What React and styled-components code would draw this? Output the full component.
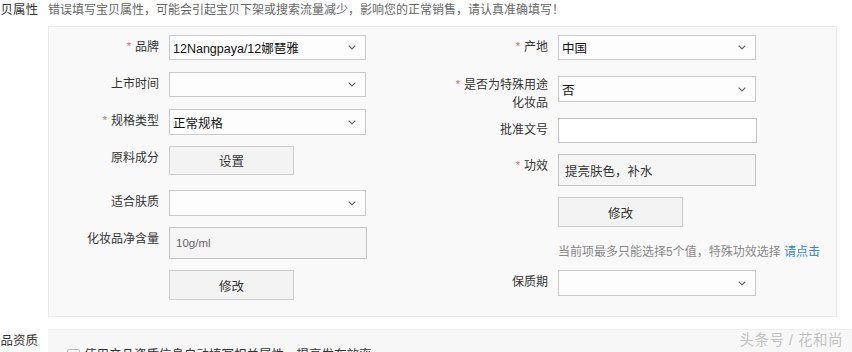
import React from 'react';
import styled, { createGlobalStyle } from 'styled-components';

const GlobalStyle = createGlobalStyle`
  html, body {
    margin: 0;
    padding: 0;
    background: #fff;
    overflow: hidden;
  }
  body {
    font-family: "Liberation Sans", "Noto Sans CJK SC", sans-serif;
    font-size: 12px;
    color: #333;
  }
`;

const Page = styled.div`
  position: relative;
  width: 852px;
  height: 352px;
  padding-top: 1px;
  box-sizing: border-box;
  overflow: hidden;
`;

const Section = styled.div`
  display: flex;
  margin-top: ${p => p.$top || 0}px;
`;

const SideLabel = styled.div`
  width: 60px;
  margin-left: -12px;
  flex-shrink: 0;
  line-height: 18px;
  padding-top: ${p => p.$pad || 0}px;
  color: #333;
  font-size: 12.5px;
  white-space: nowrap;
`;

const Main = styled.div`
  display: flex;
  flex-direction: column;
`;

const Notice = styled.div`
  line-height: 18px;
  color: #666;
  white-space: nowrap;
`;

const Panel = styled.div`
  margin-top: 7px;
  width: 789px;
  box-sizing: border-box;
  background: #f9f9f9;
  border: 1px solid #ebebeb;
  padding: 8px 0 16px;
  display: grid;
  grid-template-columns: 389px 1fr;
`;

const Column = styled.div`
  display: flex;
  flex-direction: column;
`;

const FieldRow = styled.div`
  display: flex;
  align-items: flex-start;
  gap: 10px;
  margin-top: ${p => p.$top || 0}px;
`;

const Label = styled.div`
  width: 110px;
  flex-shrink: 0;
  text-align: right;
  line-height: 18px;
  padding-top: ${p => (p.$pad === undefined ? 3 : p.$pad)}px;
  color: #333;
  white-space: nowrap;
`;

const Star = styled.span`
  position: relative;
  top: -1px;
  color: #e8606a;
  font-size: 11px;
  margin-right: 4px;
`;

const Offset = styled.div`
  padding-left: 120px;
  margin-top: ${p => p.$top || 0}px;
`;

const SelectBox = styled.div`
  width: ${p => p.$w || 197}px;
  height: ${p => p.$h || 25}px;
  box-sizing: border-box;
  border: 1px solid #c9c9c9;
  background: #fdfdfd;
  display: flex;
  align-items: center;
  justify-content: space-between;
  padding: 0 9px 0 3px;
  color: #111;
  font-size: 12.5px;
`;

const TextInput = styled.div`
  width: ${p => p.$w || 197}px;
  height: ${p => p.$h || 25}px;
  box-sizing: border-box;
  border: 1px solid #c4c4c4;
  background: ${p => (p.$readonly ? '#f5f5f5' : '#fff')};
  display: flex;
  align-items: center;
  padding: 0 ${p => (p.$readonly ? 6 : 3)}px;
  color: ${p => (p.$small ? '#666' : '#333')};
  font-size: ${p => (p.$small ? 11.5 : 12.5)}px;
`;

const Button = styled.div`
  width: 125px;
  height: ${p => p.$h || 30}px;
  box-sizing: border-box;
  border: 1px solid #cdcdcd;
  background: #f3f3f3;
  display: flex;
  align-items: center;
  justify-content: center;
  color: #333;
  font-size: 12.5px;
`;

const Hint = styled.div`
  line-height: 18px;
  font-size: 12px;
  color: #888;
  white-space: nowrap;
`;

const Link = styled.span`
  color: #2e8ad8;
`;

const Panel2 = styled.div`
  flex: 1;
  height: 40px;
  background: #f7f7f7;
  border-top: 1px solid #eeeeee;
  padding: 19px 0 0 19px;
  display: flex;
  align-items: flex-start;
  gap: 4px;
`;

const Checkbox = styled.div`
  width: 13px;
  height: 13px;
  box-sizing: border-box;
  border: 1px solid #b9b9b9;
  border-radius: 2px;
  background: #fff;
`;

const CheckText = styled.div`
  line-height: 13px;
  color: #333;
  font-size: 12.5px;
`;

const Watermark = styled.div`
  position: absolute;
  right: 9px;
  bottom: 3px;
  font-size: 14.5px;
  color: #c2c2c2;
  letter-spacing: 0.5px;
  white-space: nowrap;
`;

const Chevron = () => (
  <svg width="8" height="5" viewBox="0 0 8 5">
    <path d="M0.7 0.7 L4 4 L7.3 0.7" fill="none" stroke="#666" strokeWidth="1.2" />
  </svg>
);

const Select = ({ value, w, h }) => (
  <SelectBox $w={w} $h={h}>
    <span>{value}</span>
    <Chevron />
  </SelectBox>
);

const App = () => (
  <Page>
    <GlobalStyle />
    <Section>
      <SideLabel>宝贝属性</SideLabel>
      <Main>
        <Notice>错误填写宝贝属性，可能会引起宝贝下架或搜索流量减少，影响您的正常销售，请认真准确填写！</Notice>
        <Panel>
          <Column>
            <FieldRow>
              <Label><Star>*</Star>品牌</Label>
              <Select value="12Nangpaya/12娜琶雅" />
            </FieldRow>
            <FieldRow $top={12}>
              <Label>上市时间</Label>
              <Select value="" />
            </FieldRow>
            <FieldRow $top={12}>
              <Label><Star>*</Star>规格类型</Label>
              <Select value="正常规格" h={26} />
            </FieldRow>
            <FieldRow $top={11}>
              <Label>原料成分</Label>
              <Button $h={29}>设置</Button>
            </FieldRow>
            <FieldRow $top={15}>
              <Label>适合肤质</Label>
              <Select value="" h={26} />
            </FieldRow>
            <FieldRow $top={11}>
              <Label>化妆品净含量</Label>
              <TextInput $w={198} $h={32} $readonly $small>10g/ml</TextInput>
            </FieldRow>
            <Offset $top={11}>
              <Button>修改</Button>
            </Offset>
          </Column>
          <Column>
            <FieldRow>
              <Label><Star>*</Star>产地</Label>
              <Select value="中国" w={198} />
            </FieldRow>
            <FieldRow $top={16}>
              <Label $pad={0}><Star>*</Star>是否为特殊用途<br />化妆品</Label>
              <Select value="否" w={198} h={26} />
            </FieldRow>
            <FieldRow $top={6}>
              <Label>批准文号</Label>
              <TextInput $w={199}>&nbsp;</TextInput>
            </FieldRow>
            <FieldRow $top={11}>
              <Label><Star>*</Star>功效</Label>
              <TextInput $w={198} $h={32} $readonly>提亮肤色，补水</TextInput>
            </FieldRow>
            <Offset $top={11}>
              <Button>修改</Button>
            </Offset>
            <Offset $top={16}>
              <Hint>当前项最多只能选择5个值，特殊功效选择 <Link>请点击</Link></Hint>
            </Offset>
            <FieldRow $top={9}>
              <Label>保质期</Label>
              <Select value="" w={198} h={26} />
            </FieldRow>
          </Column>
        </Panel>
      </Main>
    </Section>
    <Section $top={12}>
      <SideLabel $pad={3}>产品资质</SideLabel>
      <Panel2>
        <Checkbox />
        <CheckText>使用产品资质信息自动填写相关属性，提高发布效率</CheckText>
      </Panel2>
    </Section>
    <Watermark>头条号 / 花和尚</Watermark>
  </Page>
);

export default App;
